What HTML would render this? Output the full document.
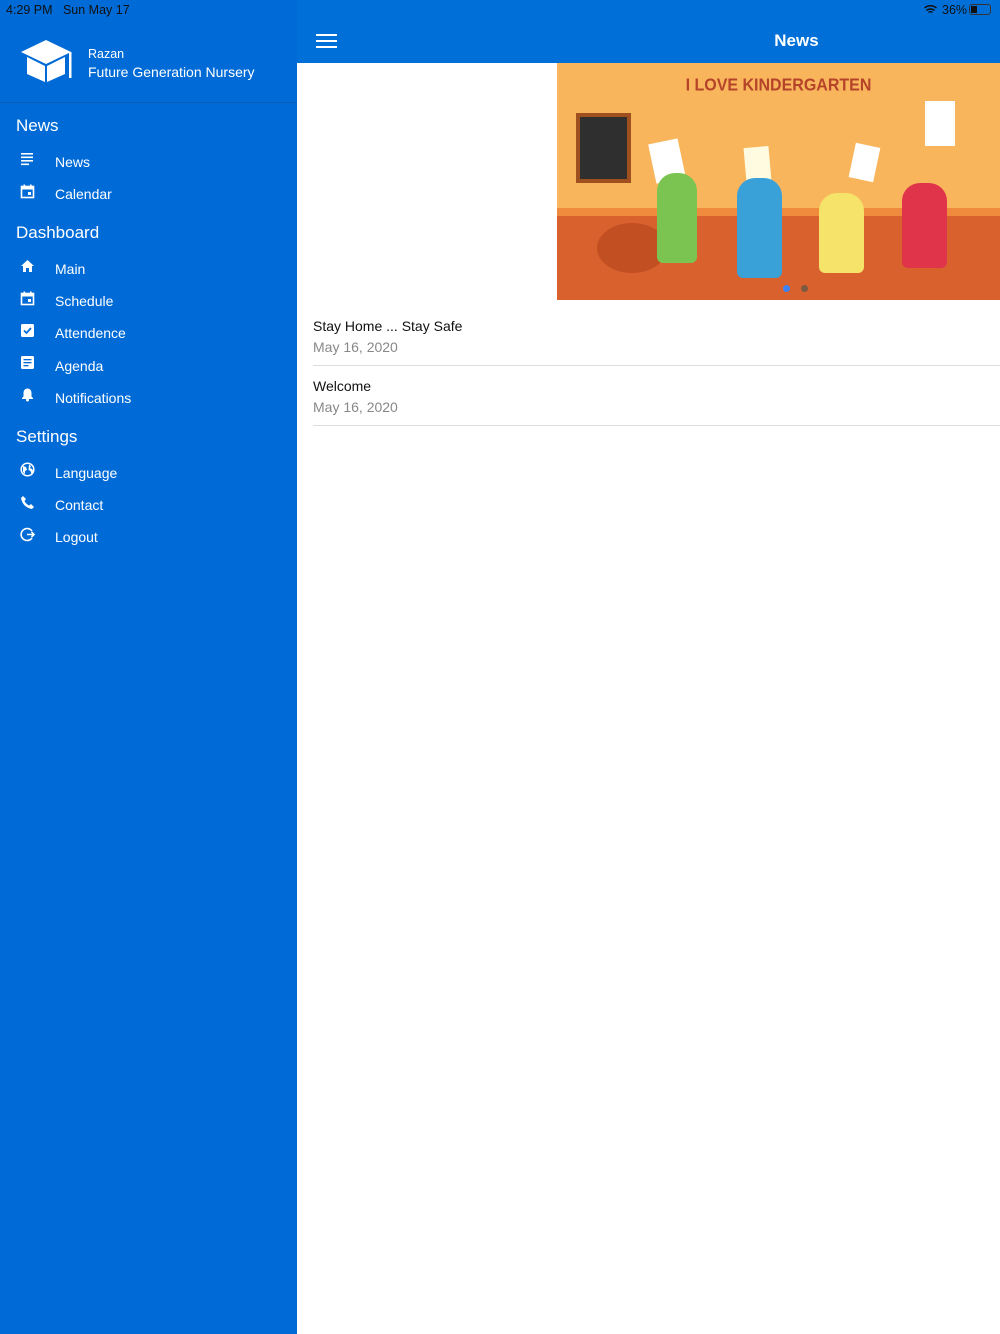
<!DOCTYPE html>
<html><head><meta charset="utf-8"><style>
*{margin:0;padding:0;box-sizing:border-box}
body{width:1000px;height:1334px;font-family:"Liberation Sans",sans-serif;background:#fff;position:relative;overflow:hidden}
#side{position:absolute;left:0;top:0;width:297px;height:1334px;background:#006bd6;color:#fff}
#main{position:absolute;left:297px;top:0;width:703px;height:1334px;background:#fff}
.status{position:absolute;top:3px;font-size:12.5px;color:#111}
.hdr{position:absolute;left:0;top:0;width:703px;height:63px;background:#0070d8}
.sec{position:absolute;left:16px;font-size:17px}
.item{position:absolute;left:55px;font-size:14px}
.ic{position:absolute;left:20px;width:15px;height:15px}
.n{position:absolute;left:16px;font-size:14px;color:#111}
.d{position:absolute;left:16px;font-size:14px;color:#888}
.line{position:absolute;left:16px;right:0;height:1px;background:#ddd}
</style></head><body>
<div id="side">
<div class="status" style="left:6px">4:29 PM&nbsp;&nbsp;&nbsp;Sun May 17</div>
<svg style="position:absolute;left:19px;top:38px" width="54" height="46" viewBox="0 0 54 46"><polygon points="2,14 27,2 52,14 27,26" fill="#fff"/><polygon points="8,19 26,28 26,44 8,36" fill="#fff"/><polygon points="28,28 46,19 46,36 28,44" fill="#fff"/><rect x="50" y="14" width="2.5" height="26" fill="#fff"/></svg>
<div style="position:absolute;left:88px;top:47px;font-size:12.5px">Razan</div>
<div style="position:absolute;left:88px;top:64px;font-size:14px">Future Generation Nursery</div>
<div style="position:absolute;left:0;top:102px;width:297px;height:1px;background:#0a5cb3"></div>
<div class="sec" style="top:116px">News</div>
<svg class="ic" style="top:152px" viewBox="0 0 15 15" fill="#fff"><rect x="1" y="1" width="12" height="1.6"/><rect x="1" y="4.5" width="12" height="1.6"/><rect x="1" y="8" width="12" height="1.6"/><rect x="1" y="11.5" width="8" height="1.6"/></svg>
<div class="item" style="top:154px">News</div>
<svg class="ic" style="top:184px" viewBox="0 0 15 15"><rect x="1.5" y="2.5" width="12" height="11" fill="none" stroke="#fff" stroke-width="1.6"/><rect x="1.5" y="2.5" width="12" height="3" fill="#fff"/><rect x="3.5" y="0.5" width="1.6" height="3" fill="#fff"/><rect x="10" y="0.5" width="1.6" height="3" fill="#fff"/><rect x="8" y="8" width="3" height="3" fill="#fff"/></svg>
<div class="item" style="top:186px">Calendar</div>
<div class="sec" style="top:223px">Dashboard</div>
<svg class="ic" style="top:259px" viewBox="0 0 15 15" fill="#fff"><polygon points="7.5,1 14,7 12,7 12,13 9,13 9,9 6,9 6,13 3,13 3,7 1,7"/></svg>
<div class="item" style="top:261px">Main</div>
<svg class="ic" style="top:291px" viewBox="0 0 15 15"><rect x="1.5" y="2.5" width="12" height="11" fill="none" stroke="#fff" stroke-width="1.6"/><rect x="1.5" y="2.5" width="12" height="3" fill="#fff"/><rect x="3.5" y="0.5" width="1.6" height="3" fill="#fff"/><rect x="10" y="0.5" width="1.6" height="3" fill="#fff"/><rect x="8" y="8" width="3" height="3" fill="#fff"/></svg>
<div class="item" style="top:293px">Schedule</div>
<svg class="ic" style="top:323px" viewBox="0 0 15 15"><rect x="1" y="1" width="13" height="13" rx="1.5" fill="#fff"/><polyline points="4,7.5 6.5,10 11,5" fill="none" stroke="#006bd6" stroke-width="1.7"/></svg>
<div class="item" style="top:325px">Attendence</div>
<svg class="ic" style="top:355px" viewBox="0 0 15 15"><rect x="1" y="1" width="13" height="13" rx="1.5" fill="#fff"/><rect x="3.5" y="4" width="8" height="1.3" fill="#006bd6"/><rect x="3.5" y="7" width="8" height="1.3" fill="#006bd6"/><rect x="3.5" y="10" width="5" height="1.3" fill="#006bd6"/></svg>
<div class="item" style="top:358px">Agenda</div>
<svg class="ic" style="top:387px" viewBox="0 0 15 15" fill="#fff"><path d="M7.5 1.5c-2.5 0-4 2-4 4.5v3.5L2 11v1h11v-1l-1.5-1.5V6c0-2.5-1.5-4.5-4-4.5z"/><circle cx="7.5" cy="13" r="1.5"/></svg>
<div class="item" style="top:390px">Notifications</div>
<div class="sec" style="top:427px">Settings</div>
<svg class="ic" style="top:462px" viewBox="0 0 15 15"><circle cx="7.5" cy="7.5" r="6.3" fill="none" stroke="#fff" stroke-width="1.5"/><path d="M3 4l3 1 1 3-2 1 0 3-2-2z M9 2.5l2 1.5-1 2 2 1 1.5 2-2 3-1-3-2-1z" fill="#fff"/></svg>
<div class="item" style="top:465px">Language</div>
<svg class="ic" style="top:495px" viewBox="0 0 15 15" fill="#fff"><path d="M3 1l3 3-1.5 2c1 2 2.5 3.5 4.5 4.5L11 9l3 3-2 2C6 13 2 9 1 3z"/></svg>
<div class="item" style="top:497px">Contact</div>
<svg class="ic" style="top:527px" viewBox="0 0 15 15"><path d="M12 4A6 6 0 1 0 12 11" fill="none" stroke="#fff" stroke-width="1.6"/><path d="M7 7.5h7M11.5 5l2.5 2.5-2.5 2.5" fill="none" stroke="#fff" stroke-width="1.6"/></svg>
<div class="item" style="top:529px">Logout</div>
</div>
<div id="main">
<div class="hdr"></div>
<div class="status" style="left:645px;color:#111">36%</div>
<svg style="position:absolute;left:626px;top:4px" width="15" height="11" viewBox="0 0 14 11"><path d="M1 4a9 9 0 0 1 12 0M3 6.5a6 6 0 0 1 8 0M5 8.5a3 3 0 0 1 4 0" fill="none" stroke="#111" stroke-width="1.5"/></svg>
<div style="position:absolute;left:672px;top:4px;width:22px;height:11px;border:1px solid #333;border-radius:3px"><div style="width:6px;height:7px;background:#111;margin:1px"></div></div>
<svg style="position:absolute;left:19px;top:33px" width="22" height="16"><rect y="1" width="21" height="2" fill="#fff"/><rect y="7" width="21" height="2" fill="#fff"/><rect y="13" width="21" height="2" fill="#fff"/></svg>
<div style="position:absolute;left:0;top:31px;text-align:center;color:#fff;font-size:17px;font-weight:bold;padding-left:296px;width:703px">News</div>
<div style="position:absolute;left:260px;top:63px;width:443px;height:237px;background:#f9b55c;overflow:hidden">
 <div style="position:absolute;left:0;top:150px;width:443px;height:90px;background:#d9612e"></div>
 <div style="position:absolute;left:0;top:145px;width:443px;height:8px;background:#f08a3c"></div>
 <div style="position:absolute;left:0;width:443px;top:14px;text-align:center;color:#b5432a;font-weight:bold;font-size:16px;transform:scaleY(1.1)">I LOVE KINDERGARTEN</div>
 <div style="position:absolute;left:19px;top:50px;width:55px;height:70px;background:#2f2f2f;border:4px solid #a0501e"></div>
 <div style="position:absolute;left:95px;top:78px;width:30px;height:40px;background:#fff;transform:rotate(-12deg)"></div>
 <div style="position:absolute;left:188px;top:84px;width:25px;height:35px;background:#fffbe0;transform:rotate(-5deg)"></div>
 <div style="position:absolute;left:295px;top:82px;width:25px;height:35px;background:#fff;transform:rotate(12deg)"></div>
 <div style="position:absolute;left:368px;top:38px;width:30px;height:45px;background:#fff"></div>
 <div style="position:absolute;left:40px;top:160px;width:70px;height:50px;border-radius:50%;background:#c24f22"></div>
 <div style="position:absolute;left:100px;top:110px;width:40px;height:90px;background:#7cc452;border-radius:18px 18px 6px 6px"></div>
 <div style="position:absolute;left:180px;top:115px;width:45px;height:100px;background:#3aa0d8;border-radius:18px 18px 6px 6px"></div>
 <div style="position:absolute;left:262px;top:130px;width:45px;height:80px;background:#f5e36a;border-radius:18px 18px 6px 6px"></div>
 <div style="position:absolute;left:345px;top:120px;width:45px;height:85px;background:#e0344a;border-radius:18px 18px 6px 6px"></div>
 <div style="position:absolute;left:226px;top:222px;width:7px;height:7px;border-radius:50%;background:#3b82f6"></div>
 <div style="position:absolute;left:244px;top:222px;width:7px;height:7px;border-radius:50%;background:#7a5a40"></div>
</div>
<div class="n" style="top:318px">Stay Home ... Stay Safe</div>
<div class="d" style="top:339px">May 16, 2020</div>
<div class="line" style="top:365px"></div>
<div class="n" style="top:378px">Welcome</div>
<div class="d" style="top:399px">May 16, 2020</div>
<div class="line" style="top:425px"></div>
</div>
</body></html>
